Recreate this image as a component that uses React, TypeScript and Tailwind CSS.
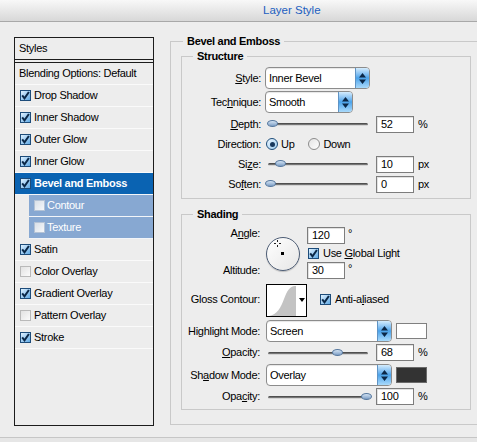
import React from 'react'

type Item = { label: string; on?: boolean; selected?: boolean; sub?: boolean }

const ITEMS: Item[] = [
  { label: 'Drop Shadow', on: true },
  { label: 'Inner Shadow', on: true },
  { label: 'Outer Glow', on: true },
  { label: 'Inner Glow', on: true },
  { label: 'Bevel and Emboss', on: true, selected: true },
  { label: 'Contour', sub: true },
  { label: 'Texture', sub: true },
  { label: 'Satin', on: true },
  { label: 'Color Overlay' },
  { label: 'Gradient Overlay', on: true },
  { label: 'Pattern Overlay' },
  { label: 'Stroke', on: true },
]

function CheckBox({ on, pale }: { on?: boolean; pale?: boolean }) {
  if (pale) {
    return <span className="w-[11px] h-[11px] shrink-0 border border-[#b4c3d6] bg-linear-to-br from-[#d9e0e8] to-[#f6f8fa]" />
  }
  return (
    <span
      className={
        on
          ? 'w-[11px] h-[11px] shrink-0 border border-[#1d4c7a] bg-linear-to-br from-[#e0f2ff] to-[#5ea9e4] flex items-center justify-center'
          : 'w-[11px] h-[11px] shrink-0 border border-[#b9b9b9] bg-linear-to-br from-[#e2e2e2] to-[#fbfbfb]'
      }
    >
      {on && (
        <svg width="9" height="9" viewBox="0 0 9 9">
          <path d="M1.2 4.4 3.5 7.3 7.9 1" fill="none" stroke="#0a2747" strokeWidth="2" />
        </svg>
      )}
    </span>
  )
}

function Radio({ on }: { on?: boolean }) {
  return (
    <span
      className={
        on
          ? 'w-[12px] h-[12px] rounded-full border border-[#1d4c7a] bg-linear-to-br from-[#eaf6ff] to-[#9fcdf0] flex items-center justify-center shrink-0'
          : 'w-[12px] h-[12px] rounded-full border border-[#8c8c8c] bg-linear-to-br from-[#e4e4e4] to-white shrink-0'
      }
    >
      {on && <span className="w-[5px] h-[5px] rounded-full bg-[#17385d]" />}
    </span>
  )
}

function Select({ value, width }: { value: string; width: string }) {
  return (
    <div className={`${width} h-[22px] flex rounded-[4px] border border-[#8c8c8c] bg-white shadow-[inset_0_1px_1px_rgba(0,0,0,0.1)] shrink-0`}>
      <span className="flex-1 flex items-center pl-[3px]">{value}</span>
      <span className="w-[14px] rounded-r-[3px] border-l border-[#5f93c4] bg-linear-to-b from-[#d4ecfd] via-[#4aa3ea] to-[#a9dafb] flex items-center justify-center">
        <svg width="7" height="11" viewBox="0 0 7 11">
          <path d="M0 4.5 3.5 0 7 4.5Z M0 6.5 3.5 11 7 6.5Z" fill="#0b2747" />
        </svg>
      </span>
    </div>
  )
}

function Slider({ thumb }: { thumb: number }) {
  // thumb = x of thumb centre, measured from slider's left edge
  return (
    <div className="relative w-[100px] h-[10px] shrink-0">
      <div className="absolute left-0 right-0 top-[4px] h-[3px] rounded-full bg-linear-to-b from-[#3d3d3d] to-[#8a8a8a] border-b border-[#d4d4d4]" />
      <div
        className="absolute top-[1px] w-[11px] h-[7px] rounded-[50%] border border-[#55779e] bg-linear-to-b from-[#d3e3f3] to-[#7e9fc6]"
        style={{ left: thumb - 5 }}
      />
    </div>
  )
}

function Num({ value }: { value: string }) {
  return (
    <div className="w-[38px] h-[17px] border border-[#7d7d7d] bg-white flex items-center pl-[4px] shrink-0 shadow-[inset_1px_1px_0_#e2e2e2]">
      {value}
    </div>
  )
}

function Dial() {
  return (
    <div className="relative w-[34px] h-[34px] rounded-full border-[1.5px] border-[#4d5d75] bg-linear-to-br from-white to-[#e6e6e6] shadow-[0_1px_1px_rgba(0,0,0,0.2)]">
      <svg className="absolute left-[6px] top-[1px]" width="9" height="9" viewBox="0 0 9 9">
        <path d="M4.5 1v2M4.5 6v2M1 4.5h2M6 4.5h2" stroke="#222" strokeWidth="1" />
      </svg>
      <span className="absolute left-[14px] top-[14px] w-[3px] h-[3px] bg-black" />
    </div>
  )
}

function Contour() {
  return (
    <div className="w-[41px] h-[33px] border border-black bg-white shrink-0">
      <svg width="39" height="31" viewBox="0 0 39 31">
        <path d="M2 31 C 10 30 14 22 17 14 C 20 6 23 1 28 1 L 29 1 L 29 31 Z" fill="#c3c3c3" />
        <path d="M32 13h6l-3 4z" fill="#000" />
      </svg>
    </div>
  )
}

function U({ children }: { children: React.ReactNode }) {
  return <span className="underline underline-offset-[1px]">{children}</span>
}

export default function App() {
  const sLabel = 'w-[80px] text-right shrink-0 pr-[1px]'
  const hLabel = 'w-[78px] text-right shrink-0'

  return (
    <div className="w-[477px] h-[442px] overflow-hidden flex flex-col bg-[#ededed] text-black text-[11px] tracking-[-0.3px] font-['Liberation_Sans',Arial,sans-serif]">
      {/* title */}
      <div className="h-[22px] shrink-0 border-b border-[#a8a8a8] bg-linear-to-b from-[#f8f8f8] to-[#d8d8d8] flex items-center pl-[263px] text-[11.5px] tracking-normal text-[#1c5ec0]">
        Layer Style
      </div>

      <div className="h-[415px] shrink-0 flex items-start pt-[14px] pl-[14px]">
        {/* styles list */}
        <div className="mt-[1px] w-[140px] h-[389px] border border-[#1c1c1c] shrink-0 flex flex-col">
          <div className="h-[22px] border-b border-[#1c1c1c] flex items-center pl-[4px]">Styles</div>
          <div className="h-[2px]" />
          <div className="border-t border-[#1c1c1c]">
            <div className="h-[22px] border-b border-[#fafafa] flex items-center pl-[4px]">Blending Options: Default</div>
            {ITEMS.map(it =>
              it.sub ? (
                <div key={it.label} className="h-[22px] pl-[14px]">
                  <div className="h-full bg-[#87a8d2] border-b border-[#f2f5f9] flex items-center gap-[2px] pl-[5px] text-white">
                    <CheckBox pale />
                    {it.label}
                  </div>
                </div>
              ) : (
                <div
                  key={it.label}
                  className={
                    it.selected
                      ? 'h-[22px] flex items-center gap-[3px] pl-[5px] border-b border-[#f2f5f9] bg-[#0a63b2] text-white font-bold'
                      : 'h-[22px] flex items-center gap-[3px] pl-[5px] border-b border-[#fafafa]'
                  }
                >
                  <CheckBox on={it.on} />
                  {it.label}
                </div>
              )
            )}
          </div>
        </div>

        {/* bevel and emboss */}
        <fieldset className="ml-[16px] -mt-[1px] w-[330px] h-[390px] border border-[#c9c9c9] shrink-0">
          <legend className="ml-[12px] px-[4px] leading-[13px] font-bold">Bevel and Emboss</legend>

          {/* structure */}
          <fieldset className="ml-[10px] mt-[2px] w-[290px] h-[149px] border border-[#c9c9c9]">
            <legend className="ml-[11px] px-[4px] leading-[13px] font-bold">Structure</legend>
            <div className="pt-[4px] flex flex-col">
              <div className="h-[22px] flex items-center">
                <span className={sLabel}><U>S</U>tyle:</span>
                <span className="ml-[3px]"><Select value="Inner Bevel" width="w-[105px]" /></span>
              </div>
              <div className="mt-[2px] h-[22px] flex items-center">
                <span className={sLabel}>Tec<U>h</U>nique:</span>
                <span className="ml-[3px]"><Select value="Smooth" width="w-[88px]" /></span>
              </div>
              <div className="mt-[1px] h-[20px] flex items-center">
                <span className={sLabel}><U>D</U>epth:</span>
                <span className="ml-[6px]"><Slider thumb={4} /></span>
                <span className="ml-[8px]"><Num value="52" /></span>
                <span className="ml-[4px]">%</span>
              </div>
              <div className="h-[20px] flex items-center">
                <span className={sLabel}>Direction:</span>
                <span className="ml-[4px] flex items-center gap-[3px]"><Radio on />Up</span>
                <span className="ml-[14px] flex items-center gap-[3px]"><Radio />Down</span>
              </div>
              <div className="h-[20px] flex items-center">
                <span className={sLabel}>Si<U>z</U>e:</span>
                <span className="ml-[6px]"><Slider thumb={12} /></span>
                <span className="ml-[8px]"><Num value="10" /></span>
                <span className="ml-[4px]">px</span>
              </div>
              <div className="h-[20px] flex items-center">
                <span className={sLabel}>So<U>f</U>ten:</span>
                <span className="ml-[6px]"><Slider thumb={2} /></span>
                <span className="ml-[8px]"><Num value="0" /></span>
                <span className="ml-[4px]">px</span>
              </div>
            </div>
          </fieldset>

          {/* shading */}
          <fieldset className="ml-[10px] mt-[9px] w-[290px] h-[202px] border border-[#c9c9c9]">
            <legend className="ml-[11px] px-[4px] leading-[13px] font-bold">Shading</legend>
            <div className="pt-[6px] flex flex-col">
              <div className="flex">
                <div className={`${hLabel} flex flex-col items-end`}>
                  <span className="h-[18px] leading-[13px]">A<U>n</U>gle:</span>
                  <span className="h-[16px]" />
                  <span className="h-[18px] flex items-center">Altitude:</span>
                </div>
                <div className="ml-[6px] pt-[10px]"><Dial /></div>
                <div className="ml-[7px] flex flex-col">
                  <div className="h-[18px] flex items-start">
                    <Num value="120" />
                    <span className="ml-[3px] -mt-[2px]">°</span>
                  </div>
                  <div className="h-[16px] flex items-center gap-[4px] pl-[1px]">
                    <CheckBox on />
                    <span>Use <U>G</U>lobal Light</span>
                  </div>
                  <div className="h-[18px] flex items-center">
                    <Num value="30" />
                    <span className="ml-[3px] self-start -mt-[1px]">°</span>
                  </div>
                </div>
              </div>

              <div className="mt-[5px] flex items-start">
                <span className={`${hLabel} pt-[7px]`}>Gloss Contour:</span>
                <span className="ml-[6px]"><Contour /></span>
                <span className="ml-[13px] mt-[7px] flex items-center gap-[4px]">
                  <CheckBox on />
                  <span>Anti-a<U>l</U>iased</span>
                </span>
              </div>

              <div className="mt-[3px] h-[22px] flex items-center">
                <span className={hLabel}>Highlight Mode:</span>
                <span className="ml-[6px]"><Select value="Screen" width="w-[126px]" /></span>
                <span className="ml-[4px] w-[31px] h-[16px] border border-[#808080] bg-white" />
              </div>
              <div className="h-[21px] flex items-center">
                <span className={hLabel}><U>O</U>pacity:</span>
                <span className="ml-[8px]"><Slider thumb={69} /></span>
                <span className="ml-[8px]"><Num value="68" /></span>
                <span className="ml-[4px]">%</span>
              </div>
              <div className="mt-[1px] h-[22px] flex items-center">
                <span className={hLabel}>Sh<U>a</U>dow Mode:</span>
                <span className="ml-[6px]"><Select value="Overlay" width="w-[126px]" /></span>
                <span className="ml-[4px] w-[31px] h-[16px] border border-[#6a6a6a] bg-[#333333]" />
              </div>
              <div className="h-[21px] flex items-center">
                <span className={hLabel}>Opa<U>c</U>ity:</span>
                <span className="ml-[8px]"><Slider thumb={98} /></span>
                <span className="ml-[8px]"><Num value="100" /></span>
                <span className="ml-[4px]">%</span>
              </div>
            </div>
          </fieldset>
        </fieldset>
      </div>

      <div className="flex-1 border-t border-[#c6c6c6] bg-[#e6e6e6]" />
    </div>
  )
}
